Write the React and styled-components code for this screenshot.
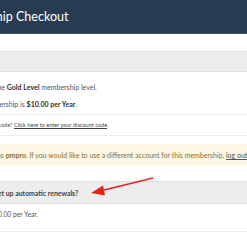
import React from 'react';
import styled, { createGlobalStyle } from 'styled-components';

const Global = createGlobalStyle`
  html, body {
    margin: 0;
    padding: 0;
    background: #ffffff;
    overflow: hidden;
  }
  body {
    font-family: Lato, "Open Sans", sans-serif;
    color: #555555;
  }
`;

const Page = styled.div`
  width: 247px;
  height: 247px;
  overflow: hidden;
  position: relative;
`;

const Header = styled.header`
  height: 33px;
  background: #283c51;
  border-bottom: 1px solid #3b4f63;
  display: flex;
  align-items: center;
  overflow: hidden;
`;

// the screenshot is a crop of a wider page, so everything starts left of the frame
const Title = styled.h1`
  margin: 0 0 0 -56px;
  font-size: 12.5px;
  font-weight: 400;
  color: #ffffff;
  white-space: nowrap;
`;

const Content = styled.div`
  margin-left: -60.5px;
  padding-top: 17px;
`;

const TableHead = styled.div`
  height: ${p => p.h || 20}px;
  background: #ededed;
  border-top: 1px solid #e2e2e2;
  border-bottom: 1px solid #e2e2e2;
  display: flex;
  align-items: center;
  font-size: 6.9px;
  font-weight: 700;
  color: #444;
  white-space: nowrap;
`;

const Line = styled.p`
  margin: 0 0 0 ${p => p.indent || 0}px;
  font-size: ${p => p.size || 7}px;
  line-height: ${p => p.lh || 17}px;
  white-space: nowrap;
  color: #555;
  b { color: #333; font-weight: 700; }
  a { color: #444; text-decoration: underline; }
`;

const Block = styled.div`
  padding: ${p => p.pad || '0'};
  border-bottom: ${p => p.border ? '1px solid #ececec' : 'none'};
`;

const Notice = styled.div`
  margin-top: 8px;
  height: 22px;
  padding-left: 3.6px;
  background: #fbf7e2;
  display: flex;
  align-items: center;
  font-size: 7px;
  color: #8e7038;
  white-space: nowrap;
  b { font-weight: 700; }
  a { color: #555; text-decoration: underline; }
`;

const Spacer = styled.div`
  height: 15px;
`;

const Arrow = styled.svg`
  position: absolute;
  left: 88px;
  top: 174px;
`;

export default function App() {
  return (
    <Page>
      <Global />
      <Header>
        <Title>Membership Checkout</Title>
      </Header>
      <Content>
        <TableHead h={19} />
        <Block pad="7px 0 1px" border>
          <Line indent={-1.5}>You have selected the <b>Gold Level</b> membership level.</Line>
          <Line>The price for membership is <b>$10.00 per Year</b>.</Line>
        </Block>
        <Block pad="2px 0 2px" border>
          <Line size={5.6} lh={16}>Do you have a discount code? <a>Click here to enter your discount code</a>.</Line>
        </Block>
        <Notice>
          <span>You are logged in as <b>pmpro</b>. If you would like to use a different account for this membership, <a>log out</a> now.</span>
        </Notice>
        <Spacer />
        <TableHead h={21}>Would you like to set up automatic renewals?</TableHead>
        <Block pad="2px 0 8px" border>
          <Line size={6.7}>You will be billed $10.00 per Year.</Line>
        </Block>
      </Content>
      <Arrow width="70" height="26" viewBox="0 0 70 26">
        <line x1="65" y1="4" x2="12" y2="17" stroke="#e8231f" strokeWidth="1.6" />
        <polygon points="3,19 15,11.5 17,21.5" fill="#e8231f" />
      </Arrow>
    </Page>
  );
}
